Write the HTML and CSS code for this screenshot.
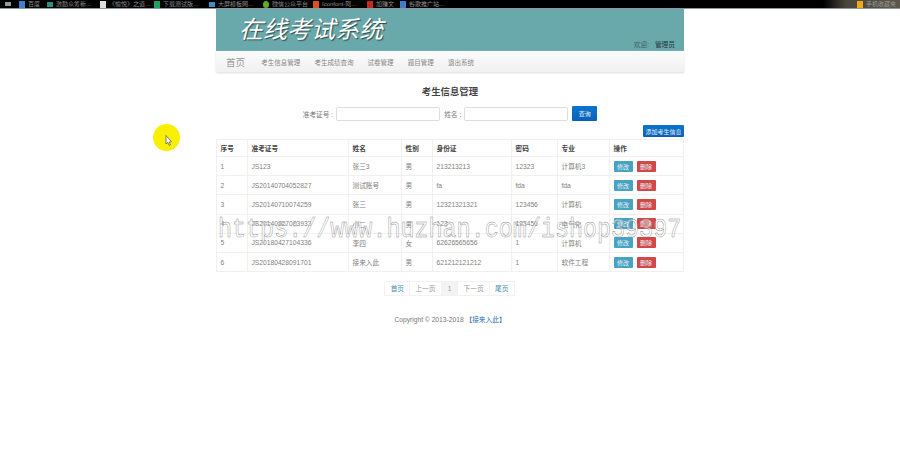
FILE: index.html
```html
<!DOCTYPE html>
<html lang="en">
<head>
  <meta charset="UTF-8" />
  <meta name="viewport" content="width=device-width, initial-scale=1" />
  <title>在线考试系统</title>
  <link rel="stylesheet" href="styles.css">
</head>
<body>

  <!-- browser bookmarks strip -->
  <div class="bookmarks">
    <span class="mark mark-home"><i class="fav fav-grey"></i></span>
    <span class="mark mark-1"><i class="fav fav-blue"></i>百度</span>
    <span class="mark mark-2"><i class="fav fav-teal"></i>激励众筹新...</span>
    <span class="mark mark-3"><i class="fav fav-white"></i>《愉悦》之道...</span>
    <span class="mark mark-4"><i class="fav fav-green"></i>下载测试版...</span>
    <span class="mark mark-5"><i class="fav fav-sky"></i>大屏模板网...</span>
    <span class="mark mark-6"><i class="fav fav-lime"></i>微信公众平台</span>
    <span class="mark mark-7"><i class="fav fav-orange"></i>Iconfont-阿...</span>
    <span class="mark mark-8"><i class="fav fav-red"></i>加赚文</span>
    <span class="mark mark-9"><i class="fav fav-blue"></i>谷歌推广站...</span>
    <span class="mobile"><i class="fav fav-amber"></i>手机收藏夹</span>
  </div>

  <div class="wrap">
    <div class="banner">
      <div class="logo">在线考试系统</div>
      <div class="welcome">欢迎: <b>管理员</b></div>
    </div>

    <div class="nav">
      <a class="nav-home">首页</a>
      <a>考生信息管理</a>
      <a>考生成绩查询</a>
      <a>试卷管理</a>
      <a>题目管理</a>
      <a>退出系统</a>
    </div>

    <h1>考生信息管理</h1>

    <div class="search">
      <label>准考证号 :</label>
      <input type="text" />
      <label>姓名 :</label>
      <input type="text" />
      <button class="btn-blue btn-search">查询</button>
    </div>

    <div class="toolbar">
      <button class="btn-blue btn-add">添加考生信息</button>
    </div>

    <table>
      <thead>
        <tr><th>序号</th><th>准考证号</th><th>姓名</th><th>性别</th><th>身份证</th><th>密码</th><th>专业</th><th>操作</th></tr>
      </thead>
      <tbody>
        <tr><td>1</td><td>JS123</td><td>张三3</td><td>男</td><td>213213213</td><td>12323</td><td>计算机3</td><td><button class="btn-edit">修改</button><button class="btn-del">删除</button></td></tr>
        <tr><td>2</td><td>JS20140704052827</td><td>测试账号</td><td>男</td><td>fa</td><td>fda</td><td>fda</td><td><button class="btn-edit">修改</button><button class="btn-del">删除</button></td></tr>
        <tr><td>3</td><td>JS20140710074259</td><td>张三</td><td>男</td><td>12321321321</td><td>123456</td><td>计算机</td><td><button class="btn-edit">修改</button><button class="btn-del">删除</button></td></tr>
        <tr><td>4</td><td>JS20140827083933</td><td>小二</td><td>男</td><td>123</td><td>123456</td><td>电气化</td><td><button class="btn-edit">修改</button><button class="btn-del">删除</button></td></tr>
        <tr><td>5</td><td>JS20180427104336</td><td>李四</td><td>女</td><td>62626565656</td><td>1</td><td>计算机</td><td><button class="btn-edit">修改</button><button class="btn-del">删除</button></td></tr>
        <tr><td>6</td><td>JS20180428091701</td><td>接来入此</td><td>男</td><td>621212121212</td><td>1</td><td>软件工程</td><td><button class="btn-edit">修改</button><button class="btn-del">删除</button></td></tr>
      </tbody>
    </table>

    <div class="pager">
      <a class="link">首页</a>
      <a>上一页</a>
      <a class="current">1</a>
      <a>下一页</a>
      <a class="link">尾页</a>
    </div>

    <div class="footer">Copyright © 2013-2018 <a>【接来入此】</a></div>
  </div>

  <!-- pointer highlight -->
  <div class="spot">
    <svg width="7" height="11" viewBox="0 0 7 11">
      <path d="M1 0.5 L1 9 L2.8 7.4 L4 10.4 L5.4 9.8 L4.2 7 L6.6 6.8 Z" fill="#f4f4ee" stroke="#555" stroke-width="0.7"/>
    </svg>
  </div>

  <div class="stamp">https://www.huzhan.com/ishop39397</div>

</body>
</html>
```

FILE: styles.css
```css
body {
  margin: 0;
  background: #fff;
  color: #808080;
  font-family: "Liberation Sans", "Noto Sans CJK SC", sans-serif;
  font-size: 6.7px;
}

.bookmarks {
  height: 8px;
  background: linear-gradient(to right, #000 91.5%, #4a463c 94%, #5c574a);
  border-bottom: 1px solid #8a9a9a;
  display: flex;
  align-items: center;
  color: #8c8c8c;
  font-size: 6px;
  line-height: 8px;
  overflow: hidden;
  white-space: nowrap;
}
.mark {
  display: flex;
  align-items: center;
  gap: 3px;
  flex: none;
}
.mark-home { width: 19px; padding-left: 5px; box-sizing: border-box; }
.mark-1 { width: 28px; }
.mark-2 { width: 53px; }
.mark-3 { width: 54px; }
.mark-4 { width: 55px; }
.mark-5 { width: 54px; }
.mark-6 { width: 50px; }
.mark-7 { width: 54px; }
.mark-8 { width: 33px; }
.mobile {
  margin-left: auto;
  padding-right: 4px;
  display: flex;
  align-items: center;
  gap: 3px;
  color: #999;
}
.fav {
  display: block;
  width: 6px;
  height: 7px;
  flex: none;
}
.fav-grey { background: #999; height: 4px; }
.fav-blue { background: #3f7fd0; }
.fav-teal { background: #2f8f80; height: 5px; }
.fav-white { background: #ddd; }
.fav-green { background: #1fa060; }
.fav-sky { background: #3c90c8; height: 5px; }
.fav-lime { background: #60b020; border-radius: 50%; }
.fav-orange { background: #e0501c; }
.fav-red { background: #c8281e; }
.fav-amber { background: #f0a818; }

.wrap {
  width: 468px;
  margin: 0 auto;
}

.banner {
  height: 42px;
  background: #6aa9ab;
  display: flex;
  justify-content: space-between;
  align-items: flex-end;
}
.logo {
  font-size: 24px;
  line-height: 42px;
  font-style: italic;
  color: #fff;
  text-shadow: 1px 1px 1px #2c4a4c;
  padding-left: 23px;
  align-self: flex-start;
}
.welcome {
  color: #3e6468;
  padding: 0 9px 2px 0;
  line-height: 9px;
}
.welcome b {
  color: #20383c;
  font-weight: 400;
  margin-left: 4px;
}

.nav {
  height: 21px;
  background: linear-gradient(#fbfbfb, #f1f1f1);
  box-shadow: 0 1px 2px #ddd;
  display: flex;
  align-items: center;
  gap: 14.2px;
  padding-left: 10px;
  color: #888;
  font-size: 6.5px;
}
.nav-home {
  font-size: 9.5px;
  color: #999;
  margin-right: 2px;
}

h1 {
  margin: 0;
  padding-top: 15px;
  font-size: 9.4px;
  line-height: 10px;
  text-align: center;
  color: #444;
}

.search {
  display: flex;
  justify-content: center;
  align-items: center;
  margin-top: 9px;
  height: 15px;
}
.search label {
  color: #777;
  margin-right: 3px;
}
.search input {
  width: 104px;
  height: 14px;
  box-sizing: border-box;
  border: 1px solid #ddd;
  border-radius: 2px;
  padding: 0;
  margin-right: 4px;
  background: #fff;
}

button {
  border: 0;
  padding: 0;
  color: #e8f0f4;
  font-family: inherit;
  font-size: 6px;
  border-radius: 1px;
}
.btn-blue { background: linear-gradient(#0a76cc, #0a60b8); }
.btn-search { width: 25px; height: 15px; }

.toolbar {
  display: flex;
  justify-content: flex-end;
  margin-top: 4px;
}
.btn-add { width: 41px; height: 12px; }

table {
  width: 468px;
  margin-top: 2px;
  border-collapse: collapse;
  table-layout: fixed;
}
th, td {
  box-sizing: border-box;
  border: 1px solid #f0f0f0;
  padding: 0 0 0 3.5px;
  text-align: left;
  font-weight: 400;
  overflow: hidden;
  white-space: nowrap;
}
th {
  height: 17px;
  color: #444;
  font-weight: 700;
}
td { height: 19.2px; }
th:nth-child(1) { width: 31px; }
th:nth-child(2) { width: 101px; }
th:nth-child(3) { width: 53px; }
th:nth-child(4) { width: 31px; }
th:nth-child(5) { width: 79px; }
th:nth-child(6) { width: 46px; }
th:nth-child(7) { width: 52px; }

.btn-edit, .btn-del {
  width: 19px;
  height: 11px;
  display: inline-block;
  vertical-align: middle;
}
.btn-edit { background: #46a3c2; }
.btn-del { background: #d04848; margin-left: 4px; }

.pager {
  display: flex;
  justify-content: center;
  margin-top: 9px;
  color: #999;
}
.pager a {
  height: 15px;
  line-height: 13px;
  padding: 0 5.2px;
  border: 1px solid #f2f2f2;
  margin-left: -1px;
  box-sizing: border-box;
}
.pager .link { color: #3f8f9f; }
.pager .current { background: #f3f3f3; padding: 0 6px; }

.footer {
  margin-top: 20px;
  text-align: center;
  color: #777;
  line-height: 8px;
}
.footer a { color: #2a6fb0; }

/* pointer highlight and url stamp sit over the page */
.spot {
  position: absolute;
  left: 153px;
  top: 124px;
  width: 27px;
  height: 27px;
  border-radius: 50%;
  background: #f8f000;
  display: flex;
  align-items: center;
  justify-content: center;
}
.spot svg { margin: 6px 0 0 3px; }

.stamp {
  position: absolute;
  left: 218px;
  top: 216px;
  font-family: "Liberation Mono", monospace;
  font-size: 23.4px;
  line-height: 28px;
  white-space: nowrap;
  color: rgba(255, 255, 255, 0.45);
  -webkit-text-stroke: 0.4px #8e8e8e;
  transform: scaleY(1.2);
}
```
